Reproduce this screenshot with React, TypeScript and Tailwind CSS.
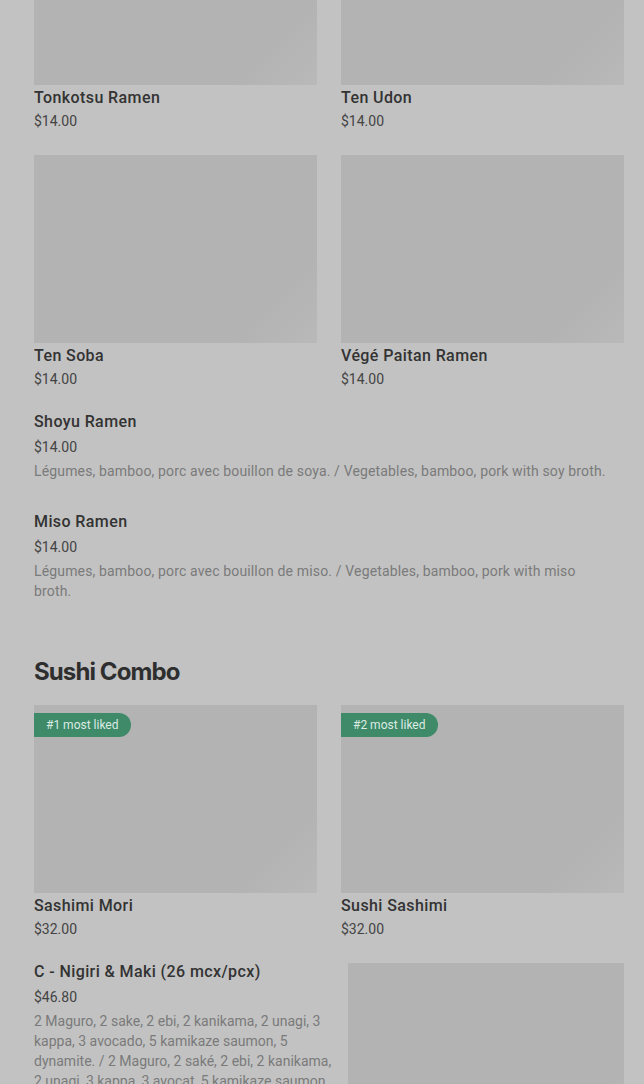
import { FC } from 'react'

interface Item {
  name: string
  price: string
  badge?: string
  description?: string
}

const gridTop: Item[] = [
  { name: 'Tonkotsu Ramen', price: '$14.00' },
  { name: 'Ten Udon', price: '$14.00' },
  { name: 'Ten Soba', price: '$14.00' },
  { name: 'Végé Paitan Ramen', price: '$14.00' },
]

const listTop: Item[] = [
  {
    name: 'Shoyu Ramen',
    price: '$14.00',
    description: 'Légumes, bamboo, porc avec bouillon de soya. / Vegetables, bamboo, pork with soy broth.',
  },
  {
    name: 'Miso Ramen',
    price: '$14.00',
    description: 'Légumes, bamboo, porc avec bouillon de miso. / Vegetables, bamboo, pork with miso broth.',
  },
]

const comboGrid: Item[] = [
  { name: 'Sashimi Mori', price: '$32.00', badge: '#1 most liked' },
  { name: 'Sushi Sashimi', price: '$32.00', badge: '#2 most liked' },
]

const Placeholder: FC<{ className?: string }> = ({ className = '' }) => (
  <div className={`bg-[linear-gradient(135deg,#b3b3b3_82%,#b9b9b9)] ${className}`} />
)

const GridCard: FC<{ item: Item }> = ({ item }) => (
  <div>
    <div className="relative">
      <Placeholder className="h-[188px]" />
      {item.badge ? (
        <span className="absolute left-0 top-2 h-6 rounded-r-full bg-[#3e8a69] pl-3 pr-3 text-[12px] leading-6 text-[#dcebe3]">
          {item.badge}
        </span>
      ) : null}
    </div>
    <div className="mt-px text-[16px] font-medium leading-6 tracking-[0.4px] text-[#333333]">{item.name}</div>
    <div className="mt-px text-[14px] leading-5 text-[#444444]">{item.price}</div>
  </div>
)

const ListItem: FC<{ item: Item; image?: boolean; wide?: boolean }> = ({ item, image, wide }) => (
  <div className={`flex gap-[15px] ${wide ? 'pr-[14px]' : ''}`}>
    <div className="flex-1">
      <div className="text-[16px] font-medium leading-6 tracking-[0.4px] text-[#333333]">{item.name}</div>
      <div className="mt-[3px] text-[14px] leading-5 text-[#444444]">{item.price}</div>
      {item.description ? (
        <p className={`mt-1 text-[14px] leading-5 text-[#7a7a7a] ${wide ? 'tracking-[0.15px]' : ''}`}>
          {item.description}
        </p>
      ) : null}
    </div>
    {image ? <Placeholder className="mt-[3px] h-[188px] w-[276px] shrink-0" /> : null}
  </div>
)

const App: FC = () => {
  return (
    <div className="h-[1084px] overflow-hidden bg-[#c2c2c2] pl-[34px] pr-[20px] font-['Roboto','Liberation_Sans',sans-serif]">
      <div className="-mt-[103px] grid grid-cols-2 gap-x-6 gap-y-6">
        {gridTop.map((item) => (
          <GridCard key={item.name} item={item} />
        ))}
      </div>

      <div className="mt-[21px] flex flex-col gap-[29px]">
        {listTop.map((item) => (
          <ListItem key={item.name} item={item} wide />
        ))}
      </div>

      <h2 className="mt-[55px] mb-[17px] font-['Inter','Liberation_Sans',sans-serif] text-[24px] font-bold leading-8 tracking-[-0.9px] text-[#2e2e2e]">
        Sushi Combo
      </h2>

      <div className="grid grid-cols-2 gap-x-6 gap-y-6">
        {comboGrid.map((item) => (
          <GridCard key={item.name} item={item} />
        ))}
      </div>

      <div className="mt-[21px]">
        <ListItem
          image
          item={{
            name: 'C - Nigiri & Maki (26 mcx/pcx)',
            price: '$46.80',
            description:
              '2 Maguro, 2 sake, 2 ebi, 2 kanikama, 2 unagi, 3 kappa, 3 avocado, 5 kamikaze saumon, 5 dynamite. / 2 Maguro, 2 saké, 2 ebi, 2 kanikama, 2 unagi, 3 kappa, 3 avocat, 5 kamikaze saumon, 5 dynamite.',
          }}
        />
      </div>
    </div>
  )
}

export default App
